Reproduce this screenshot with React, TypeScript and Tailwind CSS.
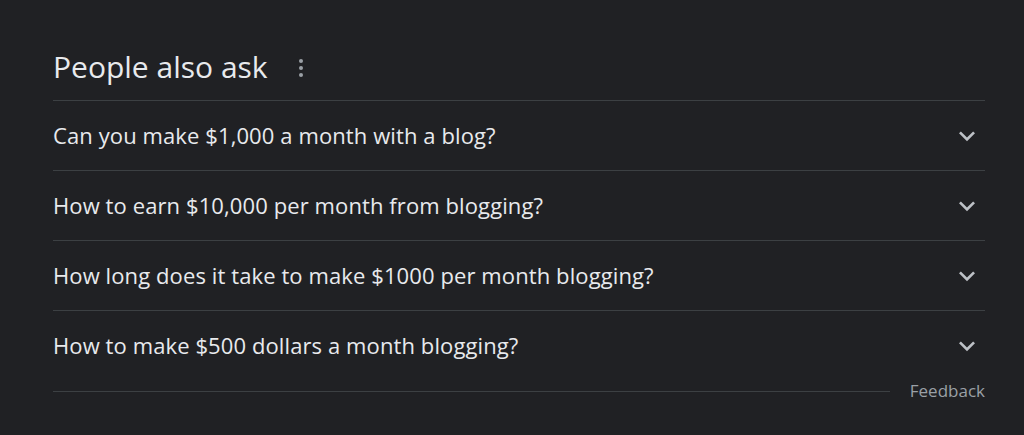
const questions = [
  "Can you make $1,000 a month with a blog?",
  "How to earn $10,000 per month from blogging?",
  "How long does it take to make $1000 per month blogging?",
  "How to make $500 dollars a month blogging?",
]

const Chevron = () => (
  <svg width="32" height="32" viewBox="0 0 24 24" className="text-[#bdc1c6]">
    <path d="M7.41 8.59 12 13.17l4.59-4.58L18 10l-6 6-6-6 1.41-1.41z" fill="currentColor" />
  </svg>
)

export default function App() {
  return (
    <div className="w-[1024px] h-[435px] bg-[#202124] font-['Open_Sans',sans-serif]">
      <div className="pl-[53px] pr-[39px] pt-[47px]">
        <div className="flex items-center h-[40px] mb-[13px]">
          <span className="text-[30px] leading-[40px] text-[#e8eaed]">People also ask</span>
          <div className="ml-[31px] flex flex-col gap-[3px] mt-[1px]">
            <span className="w-[4px] h-[4px] rounded-full bg-[#9aa0a6]" />
            <span className="w-[4px] h-[4px] rounded-full bg-[#9aa0a6]" />
            <span className="w-[4px] h-[4px] rounded-full bg-[#9aa0a6]" />
          </div>
        </div>
        {questions.map((q) => (
          <div key={q} className="flex items-center justify-between h-[70px] border-t border-[#3c4043]">
            <span className="text-[22px] text-[#e8eaed] tracking-[0.1px]">{q}</span>
            <div className="mr-[2px]"><Chevron /></div>
          </div>
        ))}
        <div className="flex items-center h-[22px] gap-[20px]">
          <div className="flex-1 h-px bg-[#3c4043]" />
          <span className="text-[17px] text-[#9aa0a6]">Feedback</span>
        </div>
      </div>
    </div>
  )
}
